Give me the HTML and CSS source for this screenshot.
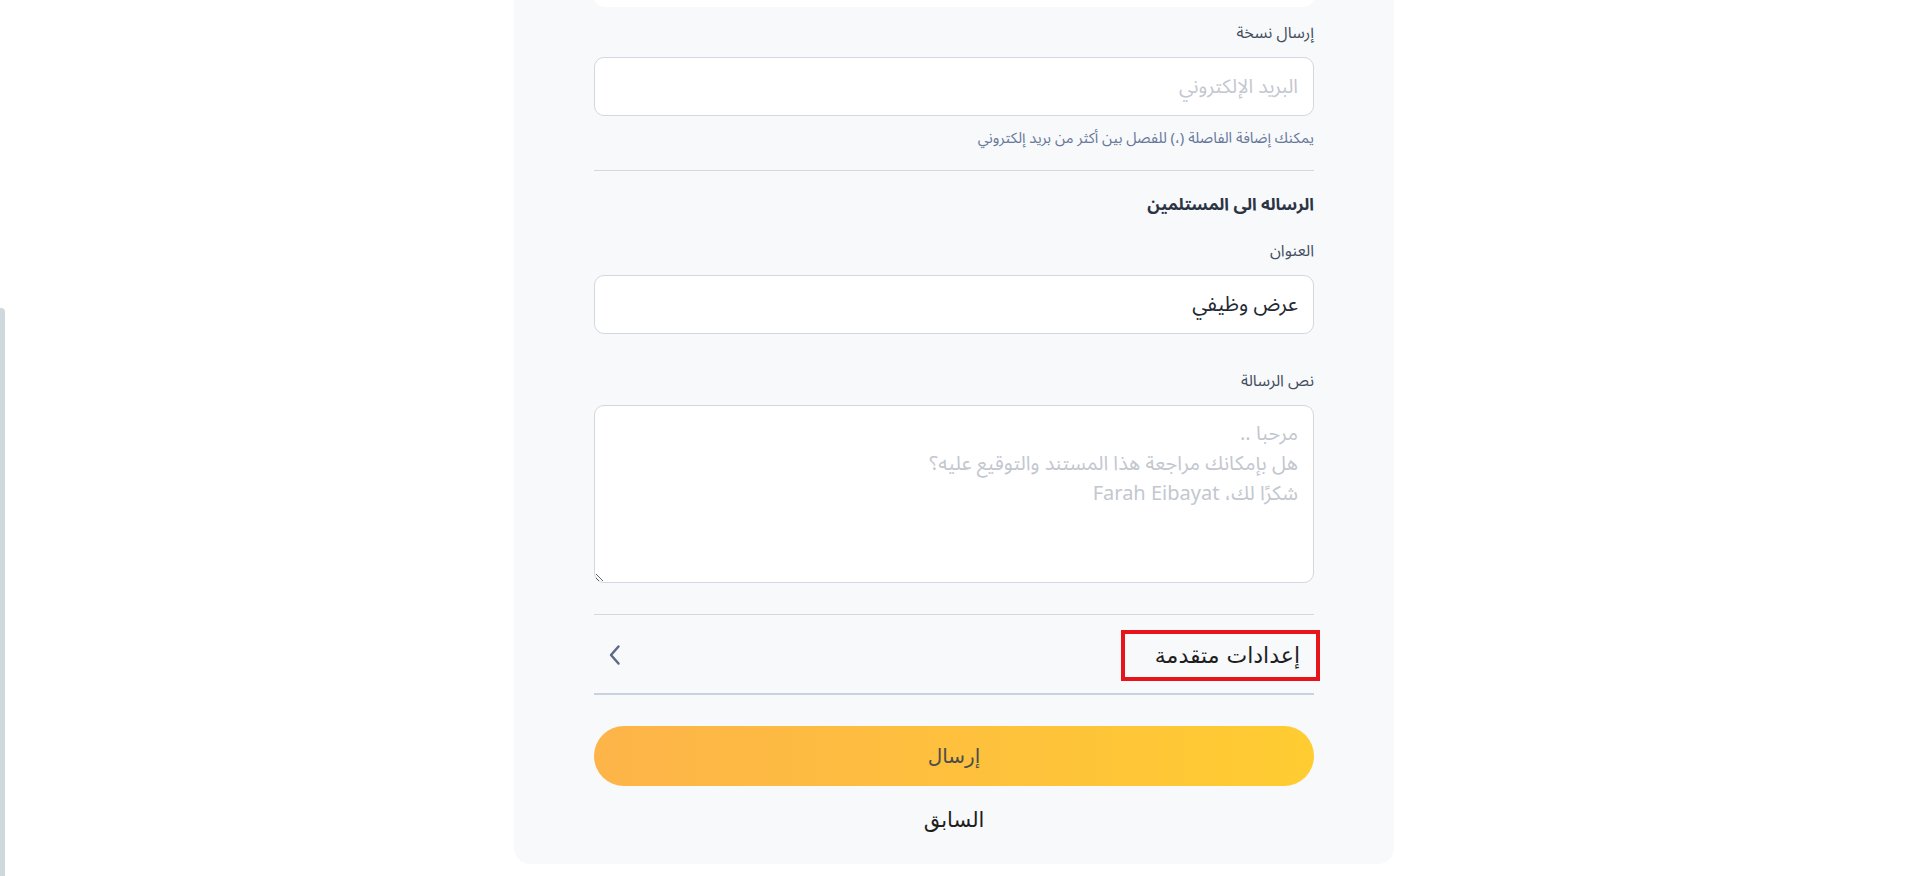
FILE: index.html
```html
<!DOCTYPE html>
<html lang="ar" dir="rtl">
<head>
<meta charset="utf-8">
<title>إرسال</title>
<link rel="stylesheet" href="styles.css">
</head>
<body>
<div class="page">
  <div class="side"><div class="side-strip"></div></div>
  <main class="card">
    <div class="prev-field"></div>

    <label class="label label-first">إرسال نسخة</label>
    <input class="field" type="text" placeholder="البريد الإلكتروني">
    <p class="hint">يمكنك إضافة الفاصلة (،) للفصل بين أكثر من بريد إلكتروني</p>

    <hr class="divider">

    <h3 class="heading">الرساله الى المستلمين</h3>

    <label class="label label-title">العنوان</label>
    <input class="field field-value" type="text" value="عرض وظيفي">

    <label class="label label-msg">نص الرسالة</label>
    <textarea class="area" placeholder="مرحبا ..&#10;هل بإمكانك مراجعة هذا المستند والتوقيع عليه؟&#10;شكرًا لك، Farah Eibayat"></textarea>

    <div class="advanced">
      <span class="advanced-title">إعدادات متقدمة</span>
      <svg class="chevron" width="24" height="24" viewBox="0 0 24 24" fill="none" stroke="#5b6b86" stroke-width="2.5" stroke-linecap="round" stroke-linejoin="round"><path d="M15.5 3.5 L8 12 L15.5 20.5"/></svg>
    </div>

    <button class="send">إرسال</button>
    <button class="back">السابق</button>
  </main>
</div>
</body>
</html>
```

FILE: styles.css
```css
* { box-sizing: border-box; }
html, body {
  margin: 0;
  padding: 0;
  background: #ffffff;
  width: 1908px;
  height: 876px;
  overflow: hidden;
}
body {
  font-family: "Noto Sans Arabic", "Noto Kufi Arabic", "DejaVu Sans", sans-serif;
}
.page {
  display: grid;
  grid-template-columns: 1fr 880px 1fr;
  height: 876px;
  direction: ltr;
}
.side {
  display: flex;
  align-items: flex-end;
}
.side-strip {
  width: 5px;
  height: 568px;
  background: #cfd8dd;
  border-top-right-radius: 4px;
}
.card {
  direction: rtl;
  width: 880px;
  margin-top: -40px;
  align-self: start;
  background: #f8f9fb;
  border-radius: 0 0 16px 16px;
  padding: 0 80px 29px;
  display: flex;
  flex-direction: column;
}
.prev-field {
  height: 47px;
  background: #ffffff;
  border-radius: 0 0 10px 10px;
}
.label {
  display: block;
  font-size: 16px;
  line-height: 24px;
  color: #434e60;
  margin-bottom: 12px;
}
.label-first { margin-top: 14px; }
.label-title { margin-top: 22px; }
.label-msg { margin-top: 35px; margin-bottom: 12px; }
.field {
  display: block;
  width: 100%;
  height: 59px;
  border: 1px solid #d3d7df;
  border-radius: 10px;
  background: #ffffff;
  padding: 0 15px;
  font-family: inherit;
  font-size: 19.5px;
  color: #1f2530;
  outline: none;
}
.field::placeholder { color: #c3c7cf; }
.field-value { font-size: 20.5px; color: #222831; }
.hint {
  margin: 12px 0 0;
  font-size: 14.8px;
  line-height: 22px;
  color: #66779a;
}
.divider {
  width: 100%;
  margin: 20px 0 0;
  border: 0;
  border-top: 1px solid #d3d9e2;
  height: 0;
}
.heading {
  margin: 22px 0 0;
  font-size: 17px;
  line-height: 24px;
  font-weight: bold;
  color: #2b3444;
}
.area {
  display: block;
  width: 100%;
  height: 178px;
  border: 1px solid #d3d7df;
  border-radius: 10px;
  background: #ffffff;
  padding: 13px 15px;
  font-family: inherit;
  font-size: 20px;
  line-height: 30px;
  color: #1f2530;
  outline: none;
  resize: vertical;
}
.area::placeholder { color: #c3c7cf; }
.advanced {
  margin-top: 31px;
  height: 81px;
  border-top: 1px solid #d3d9e2;
  border-bottom: 2px solid #c9d3e0;
  display: flex;
  align-items: center;
  justify-content: space-between;
}
.advanced-title {
  width: 199px;
  height: 51px;
  margin-right: -6px;
  margin-top: 2px;
  border: 4px solid #e8141c;
  padding: 0 16px 0 0;
  display: flex;
  align-items: center;
  font-family: "DejaVu Sans", sans-serif;
  font-size: 22px;
  color: #1e1e1e;
  white-space: nowrap;
}
.chevron {
  margin-left: 9px;
  margin-top: 2px;
}
.send {
  margin-top: 31px;
  width: 100%;
  height: 60px;
  border: 0;
  border-radius: 30px;
  background: linear-gradient(90deg, #fdb449 0%, #ffcc31 100%);
  font-family: "DejaVu Sans", sans-serif;
  font-size: 20px;
  color: #4d4d4d;
  cursor: pointer;
}
.back {
  margin: 19px auto 0;
  height: 30px;
  border: 0;
  background: transparent;
  font-family: "DejaVu Sans", sans-serif;
  font-size: 21px;
  line-height: 30px;
  color: #1e1e1e;
  padding: 0;
  cursor: pointer;
}
```
